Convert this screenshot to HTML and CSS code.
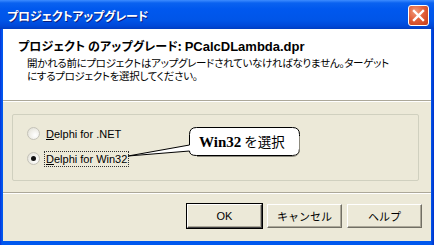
FILE: index.html
```html
<!DOCTYPE html>
<html lang="ja">
<head>
  <meta charset="UTF-8">
  <title>プロジェクトアップグレード</title>
  <link rel="stylesheet" href="styles.css">
</head>
<body>
  <div class="window">
    <!-- Title bar -->
    <div class="titlebar">
      <span class="title">プロジェクトアップグレード</span>
      <div class="close">
        <svg width="13" height="13" viewBox="0 0 13 13">
          <path d="M2 2 L11 11 M11 2 L2 11" stroke="#fff" stroke-width="2.4" stroke-linecap="square"/>
        </svg>
      </div>
    </div>

    <div class="client">
      <!-- Header -->
      <div class="header">
        <h1>プロジェクト<span class="gap"></span>のアップグレード: <span class="latin">PCalcDLambda.dpr</span></h1>
        <p>開かれる前にプロジェクトはアップグレードされていなければなりません。ターゲット<br>にするプロジェクトを選択してください。</p>
      </div>
      <div class="separator"></div>

      <!-- Options -->
      <div class="content">
        <div class="group">
          <label class="option">
            <span class="radio"></span>
            <span class="label"><u>D</u>elphi for .NET</span>
          </label>
          <label class="option">
            <span class="radio checked"></span>
            <span class="label focus"><u>D</u>elphi for Win32</span>
          </label>

          <!-- Callout -->
          <div class="callout">
            <svg width="180" height="40" viewBox="0 0 180 40">
              <path d="M71.5 3.5 H167.5 Q174.5 3.5 174.5 10.5 V24.5 Q174.5 31.5 167.5 31.5 H71.5 Q64.5 31.5 64.5 27 L3 32 L64.5 21 V10.5 Q64.5 3.5 71.5 3.5 Z"
                    fill="#fff" stroke="#000" stroke-width="1"/>
              <path d="M174.5 12 V25 Q174.5 32.5 167 32.5 H72" fill="none" stroke="#8c8a7e" stroke-width="1"/>
            </svg>
            <span class="callout-text"><b>Win32</b> を選択</span>
          </div>
        </div>
      </div>
      <div class="separator"></div>

      <!-- Buttons -->
      <div class="buttons">
        <button class="btn default">OK</button>
        <button class="btn">キャンセル</button>
        <button class="btn">ヘルプ</button>
      </div>
    </div>
  </div>
</body>
</html>
```

FILE: styles.css
```css
/* General */
body {
  margin: 0;
  font-family: "Liberation Sans", "Noto Sans CJK JP", sans-serif;
  font-size: 11px;
  color: #000;
  background: #fff;
}

.window {
  width: 434px;
  height: 245px;
  display: flex;
  flex-direction: column;
  background: linear-gradient(to right, #0831d9 0, #0058ee 2px, #0058ee 431px, #0030c8 434px);
  box-sizing: border-box;
}

/* Title bar */
.titlebar {
  height: 29px;
  display: flex;
  align-items: center;
  justify-content: space-between;
  padding: 0 5px 0 7px;
  background: linear-gradient(#3d8cff 0, #0a62f0 3px, #0058ee 9px, #0055e8 20px, #0048d8 26px, #003dc0 29px);
  box-sizing: border-box;
}

.title {
  color: #fff;
  font-family: "Noto Sans CJK JP", sans-serif;
  font-weight: bold;
  font-size: 12px;
  font-feature-settings: "palt";
  letter-spacing: -0.2px;
  text-shadow: 1px 1px 0 #0a1e80;
  margin-top: 1px;
}

.close {
  width: 21px;
  height: 21px;
  border: 1px solid #fff;
  border-radius: 3px;
  box-sizing: border-box;
  display: flex;
  align-items: center;
  justify-content: center;
  background: radial-gradient(circle at 35% 30%, #f29c7c 0, #e2603a 45%, #c23a18 100%);
  margin-top: 2px;
}

/* Client area */
.client {
  flex: 1;
  margin: 0 3px 4px 3px;
  background: #ece9d8;
  display: flex;
  flex-direction: column;
}

.header {
  height: 71px;
  background: #fff;
  padding: 9px 0 0 15px;
  box-sizing: border-box;
}

.header h1 {
  margin: 0;
  font-family: "Noto Sans CJK JP", sans-serif;
  font-size: 12px;
  font-weight: bold;
  font-feature-settings: "palt";
  letter-spacing: 0.1px;
  line-height: 16px;
  white-space: nowrap;
}

.header .gap {
  display: inline-block;
  width: 3px;
}

.header .latin {
  font-family: "Liberation Sans", sans-serif;
  font-size: 13px;
  letter-spacing: 0;
}

.header p {
  margin: 1px 0 0 9px;
  font-family: "Noto Sans CJK JP", sans-serif;
  font-size: 10.5px;
  font-feature-settings: "palt";
  letter-spacing: -0.3px;
  line-height: 13px;
  white-space: nowrap;
}

.separator {
  height: 0;
  border-top: 1px solid #aca899;
  border-bottom: 1px solid #fff;
}

/* Group box */
.content {
  padding: 12px 12px 11px 9px;
}

.group {
  position: relative;
  height: 67px;
  border: 1px solid #d0d0bf;
  border-radius: 2px;
  box-sizing: border-box;
  padding: 12px 0 0 14px;
  display: flex;
  flex-direction: column;
  gap: 12px;
}

.option {
  display: flex;
  align-items: center;
  height: 13px;
}

.radio {
  width: 13px;
  height: 13px;
  border-radius: 50%;
  border: 1px solid #c4c2b8;
  box-sizing: border-box;
  background: radial-gradient(circle at 65% 65%, #fff 0, #f0efe9 50%, #dcdad0 100%);
  margin-right: 4px;
  display: flex;
  align-items: center;
  justify-content: center;
}

.radio.checked::after {
  content: "";
  width: 5px;
  height: 5px;
  border-radius: 50%;
  background: #111;
}

.label {
  padding: 1px 1px;
  line-height: 12px;
  border: 1px dotted transparent;
}

.label.focus {
  border-color: #333;
}

/* Callout */
.callout {
  position: absolute;
  left: 112px;
  top: 9px;
  width: 180px;
  height: 40px;
}

.callout svg {
  display: block;
}

.callout-text {
  position: absolute;
  left: 74px;
  top: 9px;
  font-family: "Noto Sans CJK JP", sans-serif;
  font-size: 13.5px;
  line-height: 16px;
}

.callout-text b {
  font-family: "Liberation Serif", serif;
  font-size: 15px;
  font-weight: bold;
}

/* Buttons */
.buttons {
  display: flex;
  justify-content: flex-end;
  gap: 5px;
  padding: 10px 9px 0 0;
}

.btn {
  width: 75px;
  height: 24px;
  font-family: "Liberation Sans", "Noto Sans CJK JP", sans-serif;
  font-size: 11px;
  background: #ece9d8;
  border: 1px solid;
  border-color: #fff #716f64 #716f64 #fff;
  box-shadow: inset -1px -1px 0 #aca899;
  padding: 0;
  color: #000;
}

.btn.default {
  outline: 1px solid #000;
  outline-offset: 0;
  border-color: #fff #404040 #404040 #fff;
}
```
